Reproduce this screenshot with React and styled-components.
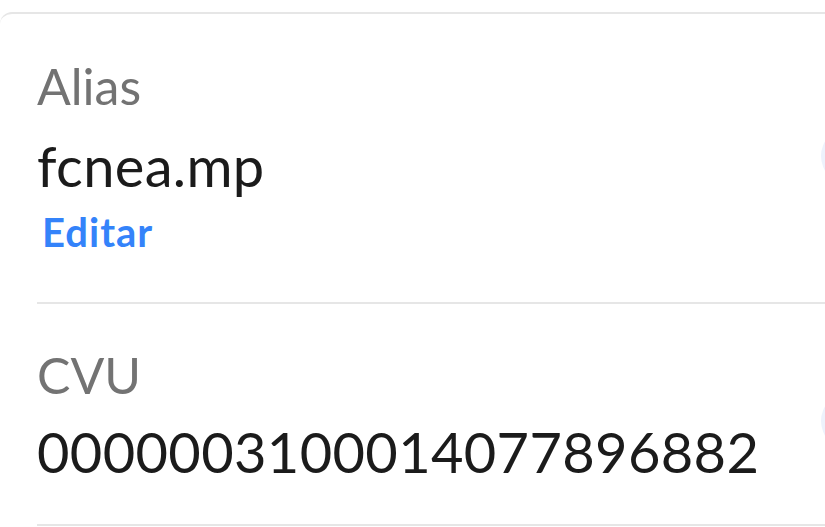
import React from 'react'
import styled, { createGlobalStyle } from 'styled-components'

const GlobalStyle = createGlobalStyle`
  html, body {
    margin: 0;
    padding: 0;
    background: #ffffff;
    overflow: hidden;
  }
  body {
    font-family: Lato, "Open Sans", sans-serif;
  }
`

const Card = styled.section`
  margin-top: 12px;
  border-top: 2px solid #e6e6e6;
  border-top-left-radius: 12px;
  background: #ffffff;
  overflow: hidden;
`

const Row = styled.div`
  display: flex;
  align-items: center;
  margin-left: 37px;
  padding: ${( { top } ) => top}px 0 ${( { bottom } ) => bottom}px 0;
  border-bottom: 2px solid #e6e6e6;
`

const Content = styled.div`
  flex: 1;
  display: flex;
  flex-direction: column;
  align-items: flex-start;
`

const Label = styled.span`
  font-size: 50px;
  line-height: 1.2;
  color: #737373;
`

const Value = styled.span`
  margin-top: ${( { gap } ) => gap}px;
  font-size: 56px;
  line-height: 1.2;
  letter-spacing: 0.35px;
  color: #1b1b1b;
`

const EditLink = styled.a`
  margin: 9px 0 0 5px;
  font-size: 40px;
  line-height: 1.2;
  font-weight: 700;
  letter-spacing: 1px;
  color: #3483fa;
  text-decoration: none;
`

const CopyButton = styled.button`
  flex: none;
  width: 56px;
  height: 56px;
  margin: ${( { shift } ) => shift}px -52px 0 0;
  padding: 0;
  border: none;
  border-radius: 50%;
  background: #edf2fc;
`

const App = () => (
  <>
    <GlobalStyle />
    <Card>
      <Row top={42} bottom={46}>
        <Content>
          <Label>Alias</Label>
          <Value gap={16}>fcnea.mp</Value>
          <EditLink href="#">Editar</EditLink>
        </Content>
        <CopyButton shift={0} aria-label="Copiar alias" />
      </Row>
      <Row top={41} bottom={39}>
        <Content>
          <Label>CVU</Label>
          <Value gap={13}>0000003100014077896882</Value>
        </Content>
        <CopyButton shift={12} aria-label="Copiar CVU" />
      </Row>
    </Card>
  </>
)

export default App
